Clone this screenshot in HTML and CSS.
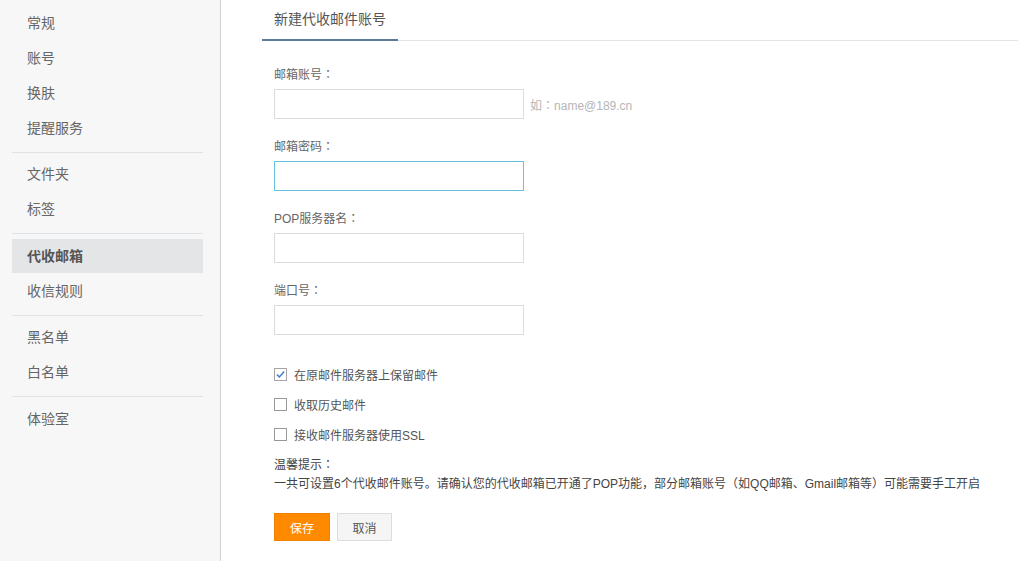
FILE: index.html
```html
<!DOCTYPE html>
<html lang="zh-CN">
<head>
<meta charset="utf-8">
<title>代收邮箱</title>
<link rel="stylesheet" href="styles.css">
</head>
<body>
<div class="page">
  <aside class="sidebar">
    <ul class="group">
      <li class="item">常规</li>
      <li class="item">账号</li>
      <li class="item">换肤</li>
      <li class="item">提醒服务</li>
    </ul>
    <div class="divider"></div>
    <ul class="group">
      <li class="item">文件夹</li>
      <li class="item">标签</li>
    </ul>
    <div class="divider"></div>
    <ul class="group">
      <li class="item active">代收邮箱</li>
      <li class="item">收信规则</li>
    </ul>
    <div class="divider"></div>
    <ul class="group">
      <li class="item">黑名单</li>
      <li class="item">白名单</li>
    </ul>
    <div class="divider"></div>
    <ul class="group">
      <li class="item">体验室</li>
    </ul>
  </aside>
  <main class="main">
    <div class="tabs">
      <div class="tab">新建代收邮件账号</div>
    </div>
    <form class="form">
      <div class="field">
        <div class="label">邮箱账号<span class="punct" lang="zh-TW">：</span></div>
        <div class="control">
          <input class="input" type="text">
          <span class="hint">如<span class="punct" lang="zh-TW">：</span>name@189.cn</span>
        </div>
      </div>
      <div class="field">
        <div class="label">邮箱密码<span class="punct" lang="zh-TW">：</span></div>
        <div class="control">
          <input class="input focused" type="password">
        </div>
      </div>
      <div class="field">
        <div class="label">POP服务器名<span class="punct" lang="zh-TW">：</span></div>
        <div class="control">
          <input class="input" type="text">
        </div>
      </div>
      <div class="field">
        <div class="label">端口号<span class="punct" lang="zh-TW">：</span></div>
        <div class="control">
          <input class="input" type="text">
        </div>
      </div>
      <div class="checks">
        <label class="check">
          <span class="box checked"><svg width="11" height="11" viewBox="0 0 11 11"><path d="M2 5.6 L4.4 8 L9.2 2.6" fill="none" stroke="#3f7fd0" stroke-width="1.5"/></svg></span>
          <span>在原邮件服务器上保留邮件</span>
        </label>
        <label class="check">
          <span class="box"></span>
          <span>收取历史邮件</span>
        </label>
        <label class="check">
          <span class="box"></span>
          <span>接收邮件服务器使用SSL</span>
        </label>
      </div>
      <div class="tip">
        <div>温馨提示<span class="punct" lang="zh-TW">：</span></div>
        <div>一共可设置6个代收邮件账号。请确认您的代收邮箱已开通了POP功能，部分邮箱账号<span class="punct" lang="zh-TW">（</span>如QQ邮箱、Gmail邮箱等<span class="punct" lang="zh-TW">）</span>可能需要手工开启</div>
      </div>
      <div class="buttons">
        <button type="button" class="btn primary">保存</button>
        <button type="button" class="btn">取消</button>
      </div>
    </form>
  </main>
</div>
</body>
</html>
```

FILE: styles.css
```css
* { box-sizing: border-box; }
html, body {
  margin: 0;
  padding: 0;
  height: 561px;
  overflow: hidden;
  background: #fff;
  font-family: "Liberation Sans", "Noto Sans CJK SC", sans-serif;
}
.page {
  display: flex;
  height: 561px;
}
.sidebar {
  width: 221px;
  flex: none;
  background: #f7f7f7;
  border-right: 1px solid #cfd3d6;
  padding: 5.5px 17px 0 12px;
}
.group {
  list-style: none;
  margin: 0;
  padding: 0;
}
.item {
  height: 35px;
  line-height: 35px;
  padding-left: 15px;
  font-size: 14px;
  color: #666;
}
.item.active {
  background: #e3e5e7;
  font-weight: bold;
  color: #555;
  height: 34px;
  line-height: 34px;
  margin-bottom: 1px;
}
.divider {
  height: 1px;
  background: #dce2e6;
  margin: 6px 0 4.5px;
}
.main {
  flex: 1;
  min-width: 0;
}
.tabs {
  height: 41px;
  margin-left: 41px;
  border-bottom: 1px solid #e2e4e6;
  display: flex;
}
.tab {
  padding: 0 12px;
  height: 41px;
  line-height: 38px;
  font-size: 14px;
  color: #555;
  border-bottom: 2px solid #5b7a98;
  margin-bottom: -1px;
}
.form {
  padding: 22px 0 0 53px;
}
.punct {
  font-family: "Noto Sans CJK TC", sans-serif;
}
.field {
  margin-bottom: 16px;
}
.label {
  height: 21px;
  line-height: 21px;
  font-size: 12px;
  color: #666;
  margin-bottom: 5px;
}
.control {
  display: flex;
  align-items: center;
}
.input {
  width: 250px;
  height: 30px;
  border: 1px solid #dcdcdc;
  margin: 0;
  padding: 0 6px;
  outline: none;
  background: #fff;
}
.input.focused {
  border-color: #67c1dd;
}
.hint {
  margin-left: 6px;
  font-size: 12px;
  color: #b5b5b5;
}
.checks {
  padding-top: 8px;
}
.check {
  display: flex;
  align-items: center;
  height: 30px;
  font-size: 12px;
  color: #555;
}
.box {
  width: 13px;
  height: 13px;
  border: 1px solid #999;
  background: #fff;
  margin-right: 7px;
  display: flex;
  align-items: center;
  justify-content: center;
}
.box.checked {
  border-color: #a5a5a5;
}
.tip {
  margin-top: 6px;
  font-size: 12px;
  line-height: 18px;
  color: #444;
}
.buttons {
  margin-top: 20px;
  display: flex;
  gap: 7px;
}
.btn {
  height: 28px;
  width: 55px;
  padding: 0;
  font-size: 12px;
  font-family: inherit;
  border: 1px solid #ddd;
  background: #f5f5f5;
  color: #555;
}
.btn.primary {
  width: 56px;
  background: #ff8a00;
  border-color: #f08000;
  color: #fff;
}
```
